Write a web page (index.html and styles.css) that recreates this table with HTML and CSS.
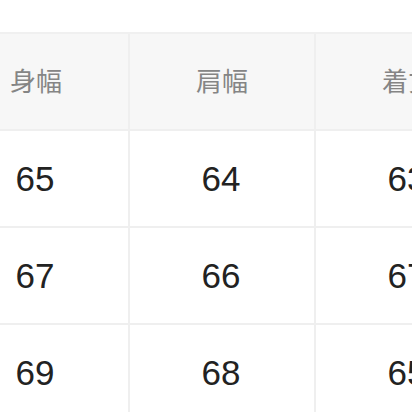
FILE: index.html
```html
<!DOCTYPE html>
<html lang="ja">
<head>
<meta charset="utf-8">
<title>サイズ表</title>
<link rel="stylesheet" href="styles.css">
</head>
<body>
<div class="viewport">
  <div class="size-table">
    <div class="cell head">身幅</div>
    <div class="cell head">肩幅</div>
    <div class="cell head">着丈</div>
    <div class="cell">65</div>
    <div class="cell">64</div>
    <div class="cell">63</div>
    <div class="cell">67</div>
    <div class="cell">66</div>
    <div class="cell">67</div>
    <div class="cell">69</div>
    <div class="cell">68</div>
    <div class="cell">65</div>
  </div>
</div>
</body>
</html>
```
FILE: styles.css
```css
html, body {
  margin: 0;
  padding: 0;
  background: #ffffff;
}

.viewport {
  width: 412px;
  height: 412px;
  overflow: hidden;
  padding-top: 32px;
  box-sizing: border-box;
}

.size-table {
  display: grid;
  grid-template-columns: repeat(3, 184px);
  grid-auto-rows: 95px;
  gap: 2px;
  width: max-content;
  margin-left: -56px;
  border-top: 2px solid #f0f0f0;
  background: #efefef;
}

.cell {
  background: #ffffff;
  display: flex;
  align-items: center;
  justify-content: center;
  font-family: "Liberation Sans", Arial, sans-serif;
  font-size: 35px;
  color: #222222;
  padding-right: 2px;
}

.cell.head {
  background: #f7f7f7;
  font-family: "Noto Sans CJK JP", "Noto Sans", sans-serif;
  font-size: 26px;
  color: #858585;
  padding-bottom: 5px;
  padding-right: 0;
}
```
